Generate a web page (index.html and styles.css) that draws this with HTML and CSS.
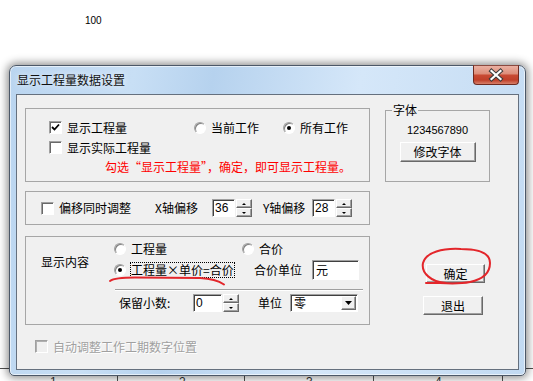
FILE: index.html
```html
<!DOCTYPE html>
<html lang="zh-CN">
<head>
    <meta charset="UTF-8">
    <title>显示工程量数据设置</title>
    <link rel="stylesheet" href="styles.css">
</head>
<body>
    <div class="sheet">
        <div class="cap">100</div>
        <div class="cells">
            <span>1</span><span>2</span><span>3</span><span>4</span><span></span>
        </div>
    </div>

    <div class="win">
        <div class="titlebar">
            <span class="title">显示工程量数据设置</span>
            <span class="close">
                <svg width="44" height="18" viewBox="0 0 44 18">
                    <path d="M17.5 5 L26.5 13 M26.5 5 L17.5 13" stroke="#3b3b3b" stroke-width="4.2" stroke-linecap="square"/>
                    <path d="M17.5 5 L26.5 13 M26.5 5 L17.5 13" stroke="#fff" stroke-width="2.2" stroke-linecap="square"/>
                </svg>
            </span>
        </div>

        <div class="client">
            <div class="left">
                <div class="group g1">
                    <div class="row">
                        <label class="chk col-a"><span class="box"><svg width="9" height="9" viewBox="0 0 9 9"><polyline points="1,4 3.5,6.5 8,1.5"/></svg></span>显示工程量</label>
                        <label class="opt col-b"><span class="dot"></span>当前工作</label>
                        <label class="opt on"><span class="dot"></span>所有工作</label>
                    </div>
                    <div class="row r2">
                        <label class="chk"><span class="box"></span>显示实际工程量</label>
                    </div>
                    <p class="hint">勾选“显示工程量”，确定，即可显示工程量。</p>
                </div>

                <div class="group g2">
                    <label class="chk w-sync"><span class="box"></span>偏移同时调整</label>
                    <span class="lx">X轴偏移</span>
                    <span class="edit e-off">36</span>
                    <span class="spin"><i class="up"></i><i class="dn"></i></span>
                    <span class="ly">Y轴偏移</span>
                    <span class="edit e-off">28</span>
                    <span class="spin"><i class="up"></i><i class="dn"></i></span>
                </div>

                <div class="group g3">
                    <div class="pick">
                        <span class="show-lbl">显示内容</span>
                        <label class="opt"><span class="dot"></span>工程量</label>
                        <label class="opt"><span class="dot"></span>合价</label>
                        <label class="opt on"><span class="dot"></span><span class="focus">工程量×单价=合价</span></label>
                        <div class="unit-row">
                            <span class="unit-lbl">合价单位</span>
                            <span class="edit e-unit">元</span>
                        </div>
                    </div>
                    <div class="sep"></div>
                    <div class="bot">
                        <span class="dec-lbl">保留小数:</span>
                        <span class="edit e-dec">0</span>
                        <span class="spin"><i class="up"></i><i class="dn"></i></span>
                        <span class="u-lbl">单位</span>
                        <span class="combo">零<span class="drop"><svg width="7" height="4" viewBox="0 0 7 4"><polygon points="0,0 7,0 3.5,4"/></svg></span></span>
                    </div>
                </div>

                <label class="chk dis"><span class="box"></span>自动调整工作工期数字位置</label>
            </div>

            <div class="right">
                <div class="fontbox">
                    <span class="legend">字体</span>
                    <span class="digits">1234567890</span>
                    <button class="btn b-font">修改字体</button>
                </div>
                <button class="btn b-ok">确定</button>
                <button class="btn b-quit">退出</button>
            </div>
        </div>
    </div>

    <!-- 红笔标注 -->
    <svg class="marks" width="533" height="381" viewBox="0 0 533 381">
        <path d="M110 281 C114 278, 121 277.5, 135 277.5 L200 278 C212 278.5, 219 281, 224 284.5"/>
        <path d="M426 283 L446 283 C431 282, 421 273, 423 263 C426 252, 443 248, 461 249 C478 249, 490 253, 490 263 C490 273, 484 279, 470 282 C460 284, 448 283.5, 440 283"/>
    </svg>
</body>
</html>
```

FILE: styles.css
```css
html, body {
    overflow: hidden;
}
body {
    margin: 0;
    background: #fff;
    font-family: "Noto Sans CJK SC", "Noto Sans", sans-serif;
    font-size: 12px;
    line-height: 12px;
    color: #000;
}

/* 背景表格 */
.cap {
    height: 368px;
    box-sizing: border-box;
    padding: 15px 0 0 85px;
    font-family: "Liberation Sans", Arial, sans-serif;
    font-size: 10px;
}
.cells {
    display: grid;
    grid-template-columns: 118px 127px 129px 129px 1fr;
    height: 20px;
    border-top: 1px solid #505050;
    font-family: "Liberation Sans", Arial, sans-serif;
    color: #333;
}
.cells span {
    border-right: 1px solid #505050;
    padding: 7px 0 0 61px;
}
.cells span:first-child {
    padding-left: 50px;
}
.cells span:last-child {
    border-right: none;
}

/* 窗口 */
.win {
    position: absolute;
    left: 9px;
    top: 65px;
    width: 517px;
    height: 311px;
    box-sizing: border-box;
    border: 1px solid #4c5868;
    border-radius: 7px 7px 5px 5px;
    padding: 0 6px 5px;
    background: linear-gradient(100deg, #bad5f0 0%, #c8dff5 22%, #b6d2ee 36%, #d5e7f9 62%, #c2daf2 100%);
    box-shadow: 0 0 9px 2px rgba(0, 0, 0, 0.45), inset 0 0 0 1px rgba(255, 255, 255, 0.6);
    display: flex;
    flex-direction: column;
}
.titlebar {
    height: 28px;
    display: flex;
    justify-content: space-between;
    align-items: flex-start;
    padding-left: 1px;
}
.title {
    line-height: 28px;
    color: #111;
    text-shadow: 0 0 6px rgba(255, 255, 255, 0.9);
}
.close {
    margin-top: -1px;
    width: 46px;
    height: 20px;
    box-sizing: border-box;
    border: 1px solid #6e2a20;
    border-top-color: #8a4a40;
    border-radius: 0 0 4px 4px;
    background: linear-gradient(#eab0a2 0%, #de8f7b 42%, #c84a33 52%, #c0402a 78%, #d7806a 100%);
    display: flex;
}

.client {
    height: 276px;
    box-sizing: border-box;
    border: 1px solid #65707e;
    background: #f0f0f0;
    display: grid;
    grid-template-columns: 345px 105px;
    column-gap: 15px;
    align-items: start;
    padding: 13px 0 0 8px;
}

/* 通用控件 */
.group {
    border: 1px solid #a6a6a6;
    box-sizing: border-box;
}
.row {
    display: flex;
    align-items: center;
    height: 13px;
}
.chk, .opt {
    display: flex;
    align-items: center;
    gap: 5px;
    white-space: nowrap;
}
.box {
    width: 13px;
    height: 13px;
    box-sizing: border-box;
    flex: none;
    border: 1px solid;
    border-color: #a0a0a0 #fff #fff #a0a0a0;
    box-shadow: inset 1px 1px 0 #696969;
    background: #fff;
    display: flex;
    align-items: center;
    justify-content: center;
}
.box svg polyline {
    fill: none;
    stroke: #000;
    stroke-width: 1.8;
}
.dot {
    width: 12px;
    height: 12px;
    box-sizing: border-box;
    flex: none;
    border-radius: 50%;
    border: 1px solid;
    border-color: #a0a0a0 #fff #fff #a0a0a0;
    box-shadow: inset 1px 1px 0 #808080;
    background: #fff;
    display: flex;
    align-items: center;
    justify-content: center;
}
.opt.on .dot::after {
    content: "";
    width: 4px;
    height: 4px;
    border-radius: 50%;
    background: #000;
}
.edit {
    box-sizing: border-box;
    height: 18px;
    border: 1px solid;
    border-color: #a0a0a0 #fff #fff #a0a0a0;
    box-shadow: inset 1px 1px 0 #404040;
    background: #fff;
    display: flex;
    align-items: center;
    padding-left: 2px;
    font-family: "Liberation Sans", Arial, sans-serif;
}
.spin {
    display: flex;
    flex-direction: column;
    width: 16px;
    height: 18px;
    margin-left: 1px;
}
.spin i {
    flex: 1;
    box-sizing: border-box;
    border: 1px solid;
    border-color: #fff #696969 #696969 #fff;
    box-shadow: inset -1px -1px 0 #a0a0a0;
    background: #f0f0f0;
    display: flex;
    align-items: center;
    justify-content: center;
}
.spin i::after {
    content: "";
    border-left: 2px solid transparent;
    border-right: 2px solid transparent;
}
.spin .up::after {
    border-bottom: 2px solid #000;
}
.spin .dn::after {
    border-top: 2px solid #000;
}
.btn {
    box-sizing: border-box;
    height: 19px;
    padding: 0;
    border: 1px solid;
    border-color: #fff #696969 #696969 #fff;
    box-shadow: inset -1px -1px 0 #a0a0a0;
    background: #f0f0f0;
    font: inherit;
    color: #000;
    line-height: 12px;
}

/* 第一组 */
.g1 {
    height: 74px;
    padding: 12px 0 0 23px;
}
.col-a {
    width: 145px;
}
.col-b {
    width: 89px;
}
.r2 {
    margin-top: 7px;
}
.hint {
    margin: 7px 0 0 56px;
    color: #f00;
    white-space: nowrap;
}

/* 第二组 */
.g2 {
    margin-top: 9px;
    height: 34px;
    display: flex;
    align-items: center;
    padding-left: 15px;
}
.w-sync {
    width: 114px;
}
.lx {
    width: 57px;
}
.ly {
    width: 49px;
    margin-left: 11px;
}
.e-off {
    width: 23px;
}

/* 第三组 */
.g3 {
    margin-top: 11px;
    height: 89px;
}
.pick {
    display: grid;
    grid-template-columns: 73px 128px auto;
    grid-template-rows: 21px 21px;
    padding: 1px 0 0 15px;
}
.show-lbl {
    grid-row: 1 / 3;
    align-self: center;
    padding-top: 6px;
}
.focus {
    margin-left: -1px;
    border: 1px dotted #000;
    line-height: 14px;
}
.unit-row {
    display: flex;
    align-items: center;
    padding-left: 12px;
}
.unit-lbl {
    width: 58px;
}
.e-unit {
    width: 47px;
    height: 20px;
    font-family: "Noto Sans CJK SC", sans-serif;
    padding-left: 3px;
}
.sep {
    margin: 9px 0 0 89px;
    width: 248px;
    border-top: 1px solid #a0a0a0;
    border-bottom: 1px solid #fff;
}
.bot {
    margin-top: 3px;
    display: flex;
    align-items: center;
    height: 18px;
    padding-left: 93px;
}
.dec-lbl {
    width: 74px;
}
.e-dec {
    width: 29px;
}
.u-lbl {
    width: 32px;
    margin-left: 19px;
}
.combo {
    width: 68px;
    height: 18px;
    box-sizing: border-box;
    border: 1px solid;
    border-color: #a0a0a0 #fff #fff #a0a0a0;
    box-shadow: inset 1px 1px 0 #404040;
    background: #fff;
    padding: 1px 1px 1px 3px;
    display: flex;
    align-items: center;
    justify-content: space-between;
}
.drop {
    width: 15px;
    height: 14px;
    box-sizing: border-box;
    border: 1px solid;
    border-color: #fff #696969 #696969 #fff;
    box-shadow: inset -1px -1px 0 #a0a0a0;
    background: #f0f0f0;
    display: flex;
    align-items: center;
    justify-content: center;
}

.dis {
    margin-top: 15px;
    padding-left: 10px;
    color: #a0a0a0;
    text-shadow: 1px 1px 0 #fff;
}
.dis .box {
    background: #f0f0f0;
    box-shadow: inset 1px 1px 0 #b0b0b0;
}

/* 右侧 */
.right {
    display: flex;
    flex-direction: column;
    align-items: flex-start;
}
.fontbox {
    margin-top: 2px;
    width: 105px;
    height: 72px;
    box-sizing: border-box;
    border: 1px solid #a6a6a6;
    display: flex;
    flex-direction: column;
    align-items: center;
}
.legend {
    align-self: flex-start;
    margin: -7px 0 0 6px;
    padding: 0 1px;
    background: #f0f0f0;
}
.digits {
    margin-top: 8px;
    font-family: "Liberation Sans", Arial, sans-serif;
    font-size: 11px;
}
.b-font {
    margin-top: 6px;
    width: 76px;
    height: 20px;
}
.b-ok {
    margin: 82px 0 0 41px;
    width: 59px;
}
.b-quit {
    margin: 13px 0 0 38px;
    width: 60px;
}

/* 标注 */
.marks {
    position: absolute;
    left: 0;
    top: 0;
    pointer-events: none;
}
.marks path {
    fill: none;
    stroke: #e3262b;
    stroke-width: 2;
    stroke-linecap: round;
}
```
